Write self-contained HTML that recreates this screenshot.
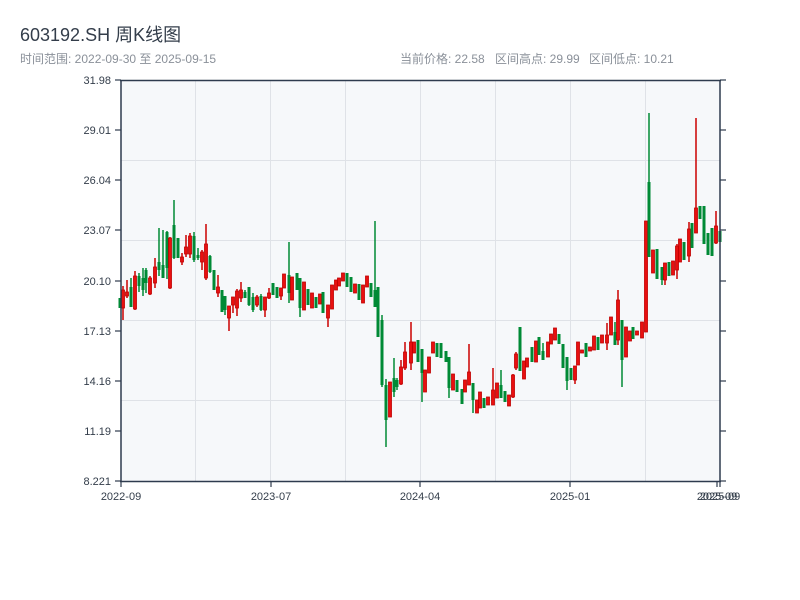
<!DOCTYPE html>
<html><head><meta charset="utf-8"><style>
html,body{margin:0;padding:0;background:#fff;width:800px;height:600px;overflow:hidden;font-family:"Liberation Sans","Noto Sans CJK SC",sans-serif}
</style></head><body>
<svg id="s" width="800" height="600" xmlns="http://www.w3.org/2000/svg" font-family="Liberation Sans, Noto Sans CJK SC, sans-serif">
<text x="20" y="41" font-size="18" fill="#333d4a">603192.SH 周K线图</text>
<text x="20" y="63" font-size="12" fill="#8a9099">时间范围: 2022-09-30 至 2025-09-15</text>
<text x="400" y="63" font-size="12" fill="#8a9099">当前价格: 22.58</text>
<text x="495" y="63" font-size="12" fill="#8a9099">区间高点: 29.99</text>
<text x="589" y="63" font-size="12" fill="#8a9099">区间低点: 10.21</text>
<rect x="121" y="80" width="599" height="401" fill="#f6f8fa"/>
<g stroke="#dfe2e7" stroke-width="1">
<line x1="121" y1="160.5" x2="720" y2="160.5"/><line x1="121" y1="240.5" x2="720" y2="240.5"/><line x1="121" y1="320.5" x2="720" y2="320.5"/><line x1="121" y1="400.5" x2="720" y2="400.5"/>
<line x1="195.5" y1="80" x2="195.5" y2="481"/><line x1="270.5" y1="80" x2="270.5" y2="481"/><line x1="345.5" y1="80" x2="345.5" y2="481"/><line x1="420.5" y1="80" x2="420.5" y2="481"/><line x1="495.5" y1="80" x2="495.5" y2="481"/><line x1="570.5" y1="80" x2="570.5" y2="481"/><line x1="645.5" y1="80" x2="645.5" y2="481"/>
</g>
<g id="c"></g>
<g stroke="#2e3b4e" stroke-width="1.5" fill="none">
<line x1="121" y1="80" x2="121" y2="482"/><line x1="720" y1="80" x2="720" y2="482"/>
<line x1="120" y1="80.5" x2="721" y2="80.5"/><line x1="120" y1="481.5" x2="721" y2="481.5"/>
</g>
<g id="t" stroke="#2e3b4e" stroke-width="1.2"></g>
<g font-size="11" fill="#333d4a" id="lab"></g>
</svg>
<script>
var D=[[120,298,308,298,308,'g'],[123,290,308,286,320,'r'],[127,292,296,280,298,'r'],[131,287,307,278,307,'g'],[135,276,309,271,310,'r'],[139,276,286,273,292,'g'],[143,278,290,268,296,'g'],[146,270,283,268,293,'g'],[150,278,294,276,295,'r'],[155,267,283,258,288,'r'],[159,262,270,228,276,'g'],[163,265,278,230,278,'g'],[167,232,268,231,279,'g'],[170,238,288,237,289,'r'],[174,225,258,200,259,'g'],[178,238,258,238,258,'g'],[182,257,262,253,265,'r'],[186,247,254,235,257,'r'],[190,236,254,233,258,'r'],[194,236,260,232,262,'g'],[198,255,258,248,260,'g'],[202,252,262,250,270,'r'],[206,244,278,224,280,'r'],[210,256,272,255,273,'g'],[214,270,290,270,290,'g'],[218,287,293,275,297,'r'],[222,290,312,290,312,'g'],[225,296,310,296,315,'g'],[229,306,318,306,331,'r'],[233,297,305,297,313,'r'],[237,291,308,289,316,'r'],[241,290,298,282,302,'r'],[245,292,298,290,298,'g'],[249,287,305,287,306,'g'],[253,297,310,293,312,'g'],[257,297,305,295,307,'r'],[261,296,310,294,311,'g'],[265,297,310,297,317,'r'],[269,293,298,288,299,'r'],[273,283,295,283,295,'g'],[277,287,298,287,298,'g'],[281,288,296,288,300,'r'],[284,274,288,274,288,'r'],[289,275,293,242,303,'g'],[292,277,300,277,300,'r'],[297,273,290,273,290,'g'],[300,278,308,278,317,'g'],[304,282,310,282,310,'r'],[308,289,305,289,305,'g'],[312,293,308,293,308,'r'],[316,297,308,297,308,'g'],[320,294,304,294,304,'r'],[323,292,313,292,313,'g'],[328,305,318,305,327,'r'],[332,285,309,285,309,'r'],[336,280,290,280,290,'r'],[339,278,286,278,286,'r'],[343,273,281,273,281,'r'],[347,273,287,273,287,'g'],[351,277,292,277,292,'g'],[355,284,293,284,293,'r'],[359,284,300,284,300,'g'],[363,285,303,285,303,'r'],[367,276,287,276,287,'r'],[371,283,297,283,297,'g'],[375,290,307,221,307,'g'],[378,287,337,287,337,'g'],[382,320,385,315,387,'g'],[386,385,420,379,447,'g'],[390,382,417,382,417,'r'],[394,378,392,358,397,'g'],[397,380,387,378,390,'g'],[401,367,384,360,385,'r'],[405,352,368,342,370,'r'],[411,342,363,322,370,'r'],[414,342,353,342,353,'r'],[418,340,362,340,362,'g'],[422,349,373,349,402,'g'],[425,370,392,370,392,'r'],[429,357,373,357,373,'r'],[433,342,353,342,353,'r'],[437,343,357,343,357,'g'],[441,343,358,343,358,'g'],[446,351,362,351,362,'g'],[449,357,388,357,398,'g'],[453,374,390,374,390,'r'],[457,380,392,380,392,'g'],[462,389,404,389,404,'g'],[465,380,392,380,392,'r'],[469,372,385,344,385,'r'],[473,383,400,383,413,'g'],[477,400,413,400,413,'r'],[480,392,408,392,408,'r'],[484,398,408,398,408,'g'],[488,397,405,397,405,'r'],[493,390,405,368,405,'r'],[497,383,398,383,398,'r'],[501,385,398,370,398,'g'],[505,391,402,391,402,'g'],[509,395,406,395,406,'r'],[513,375,397,374,398,'r'],[516,354,368,352,370,'r'],[520,327,371,327,371,'g'],[524,361,379,361,379,'r'],[527,358,367,358,367,'r'],[532,347,362,347,362,'g'],[536,341,362,341,362,'r'],[539,337,355,337,355,'g'],[543,351,360,343,360,'g'],[548,342,357,342,357,'r'],[551,334,344,334,344,'r'],[555,328,340,328,340,'r'],[559,334,344,334,344,'g'],[563,344,368,344,368,'g'],[567,357,381,357,390,'g'],[571,368,380,368,380,'g'],[575,366,380,366,384,'r'],[578,342,365,342,365,'r'],[582,350,353,350,353,'r'],[586,343,357,343,357,'g'],[590,347,351,347,351,'r'],[594,336,350,336,350,'r'],[598,337,350,337,350,'g'],[602,335,343,335,343,'r'],[607,335,343,323,350,'r'],[611,317,335,317,335,'r'],[615,332,345,322,345,'g'],[618,300,340,290,345,'r'],[622,320,360,320,387,'g'],[626,327,357,327,357,'r'],[630,331,341,331,341,'r'],[633,327,339,327,339,'g'],[637,331,335,331,335,'r'],[642,322,338,322,338,'r'],[646,221,332,221,332,'r'],[649,182,257,113,257,'g'],[653,250,273,250,273,'r'],[657,249,279,249,279,'g'],[662,267,280,267,285,'g'],[665,263,280,263,285,'r'],[669,262,276,262,276,'g'],[673,261,275,261,275,'r'],[677,246,270,244,279,'r'],[680,239,262,239,262,'r'],[684,242,260,242,260,'g'],[689,229,256,222,262,'r'],[692,223,248,223,248,'g'],[696,208,233,118,233,'r'],[700,206,219,206,219,'g'],[704,206,244,206,244,'g'],[708,233,255,233,255,'g'],[712,228,256,228,256,'g'],[716,226,243,211,244,'r'],[720,231,242,231,242,'g']];
var h='';D.forEach(function(d){var col=d[5]=='r'?'#cc0000':'#008a35';var x=d[0];
h+='<line x1="'+x+'" x2="'+x+'" y1="'+d[3]+'" y2="'+d[4]+'" stroke="'+col+'" stroke-width="1.5"/>';
var bh=Math.max(2,d[2]-d[1]);
if(d[5]=='r')h+='<rect x="'+(x-1.5)+'" y="'+d[1]+'" width="3" height="'+bh+'" fill="#e81010" stroke="#c00000" stroke-width="0.8"/>';
else h+='<rect x="'+(x-1.5)+'" y="'+d[1]+'" width="3" height="'+bh+'" fill="#008a35"/>';});
document.getElementById('c').innerHTML=h;
var Y=[[80,'31.98'],[130,'29.01'],[180,'26.04'],[230,'23.07'],[281,'20.10'],[331,'17.13'],[381,'14.16'],[431,'11.19'],[481,'8.221']];
var t='',l='';Y.forEach(function(y){t+='<line x1="115" x2="121" y1="'+y[0]+'" y2="'+y[0]+'"/><line x1="720" x2="726" y1="'+y[0]+'" y2="'+y[0]+'"/>';l+='<text x="111" y="'+(y[0]+4)+'" text-anchor="end">'+y[1]+'</text>';});
var X=[[121,'2022-09'],[271,'2023-07'],[420,'2024-04'],[570,'2025-01'],[717,'2025-09'],[720,'2025-09']];
X.forEach(function(x){t+='<line y1="481" y2="487" x1="'+x[0]+'" x2="'+x[0]+'"/>';l+='<text y="500" x="'+x[0]+'" text-anchor="middle">'+x[1]+'</text>';});
document.getElementById('t').innerHTML=t;document.getElementById('lab').innerHTML=l;
</script>
</body></html>
